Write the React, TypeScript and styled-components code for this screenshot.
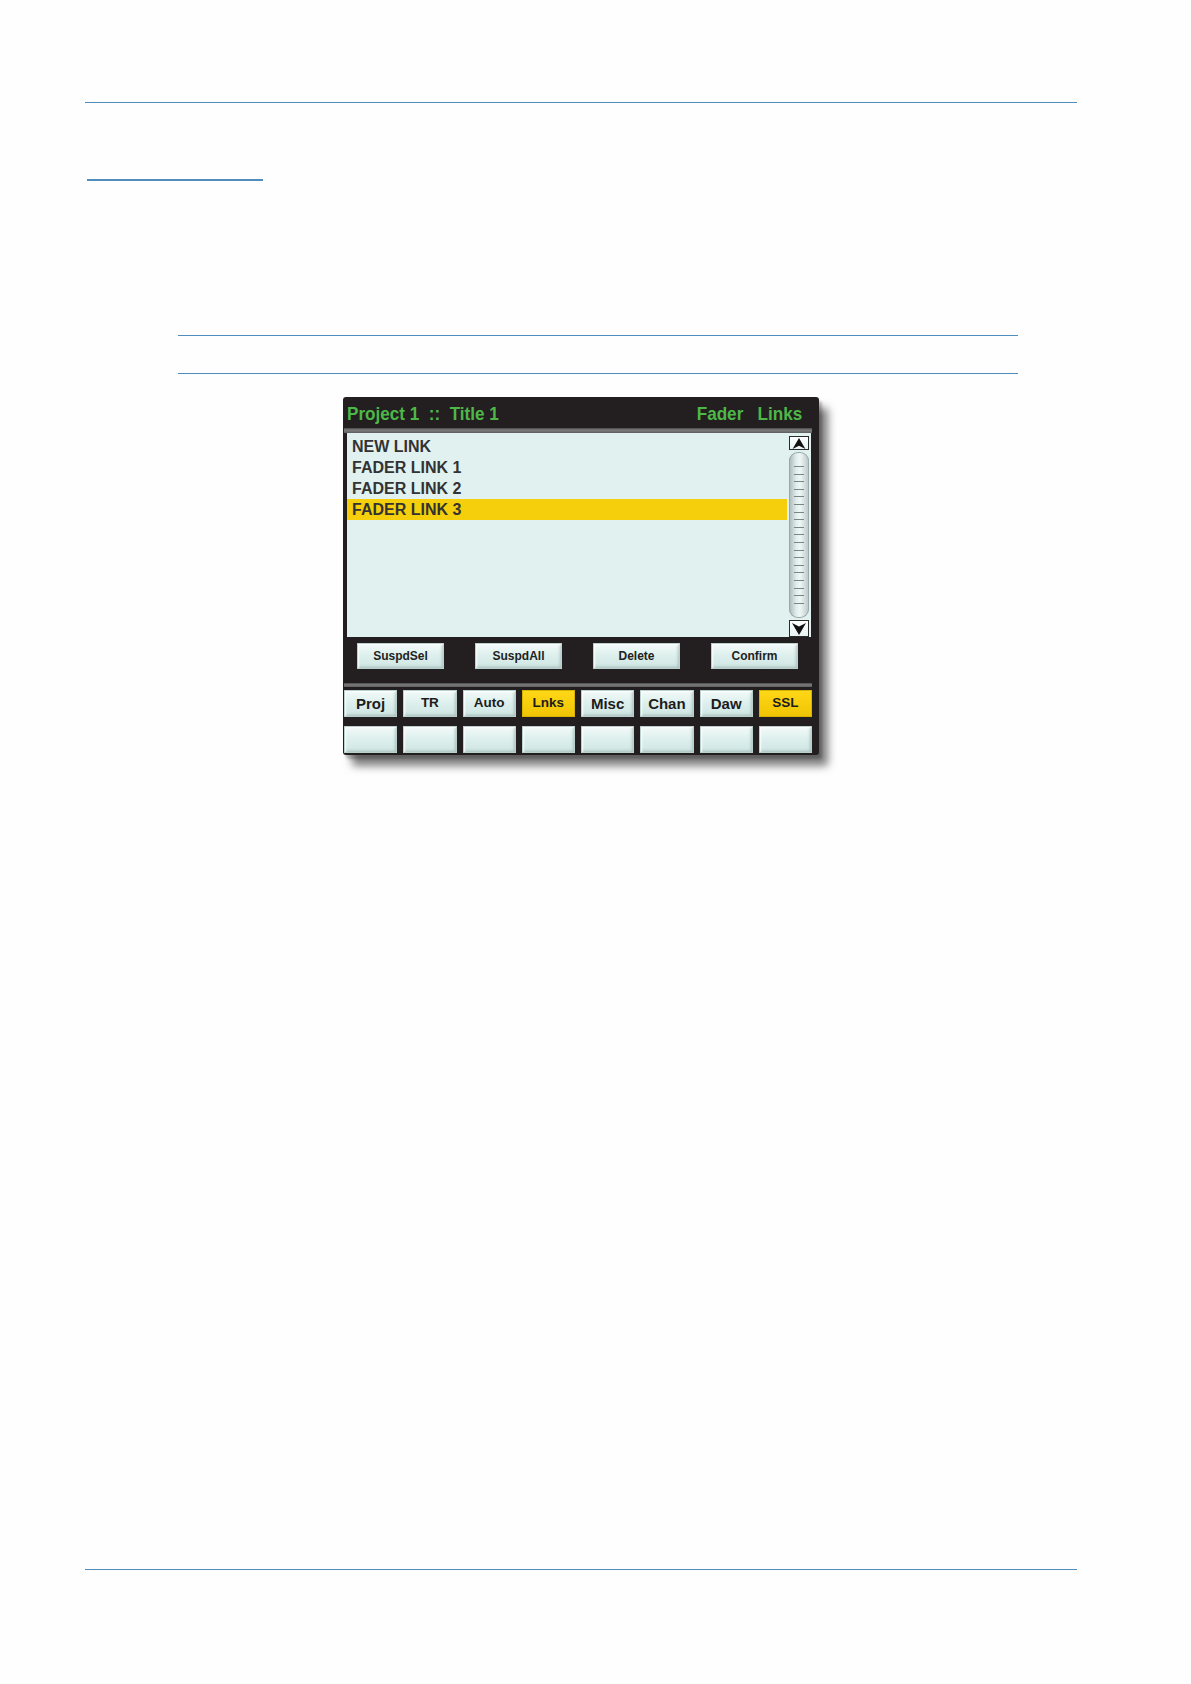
import React from "react";
import styled, { createGlobalStyle } from "styled-components";

const Global = createGlobalStyle`
  html, body { margin: 0; padding: 0; background: #fefefe; }
  body { font-family: "Liberation Sans", Arial, sans-serif; }
`;

const Page = styled.div`
  width: 1191px;
  height: 1684px;
  display: flex;
  flex-direction: column;
  align-items: flex-start;
`;

const Rule = styled.div<{ $top: number; $left: number; $width: number; $thick?: number }>`
  margin-top: ${(p) => p.$top}px;
  margin-left: ${(p) => p.$left}px;
  width: ${(p) => p.$width}px;
  height: ${(p) => p.$thick ?? 1}px;
  background: #4f8dbd;
  flex: none;
`;

const Panel = styled.div`
  margin-top: 23px;
  margin-left: 343px;
  width: 476px;
  height: 358px;
  box-sizing: border-box;
  background: #231f20;
  border-radius: 3px;
  box-shadow: 9px 11px 9px rgba(0, 0, 0, 0.5), 3px 4px 3px rgba(0, 0, 0, 0.25);
  display: flex;
  flex-direction: column;
  padding-bottom: 2px;
  flex: none;
`;

const Header = styled.div`
  height: 31px;
  box-sizing: border-box;
  padding: 3px 17px 0 4px;
  display: flex;
  justify-content: space-between;
  align-items: center;
  color: #4db848;
  font-weight: bold;
  font-size: 19px;
  white-space: pre;
`;

const Condensed = styled.span<{ $origin: "left" | "right" }>`
  display: inline-block;
  transform: scaleX(0.9);
  transform-origin: ${(p) => p.$origin} center;
`;

const Band = styled.div<{ $h: number; $mt?: number }>`
  height: ${(p) => p.$h}px;
  margin: ${(p) => p.$mt ?? 0}px 7px 0 1px;
  background: linear-gradient(to bottom, #4a4a4a, #7d7d7d 45%, #5c5c5c);
`;

const ListBox = styled.div`
  height: 204px;
  margin: 0 8px 0 4px;
  box-sizing: border-box;
  padding: 3px 2px 0 0;
  background: #e1f1ef;
  display: grid;
  grid-template-columns: 1fr 20px;
  column-gap: 2px;
`;

const Items = styled.div`
  display: flex;
  flex-direction: column;
`;

const Item = styled.div<{ $sel?: boolean }>`
  height: 21px;
  line-height: 21px;
  padding-left: 5px;
  font-size: 16px;
  font-weight: bold;
  color: #333333;
  background: ${(p) => (p.$sel ? "#f6cf0c" : "transparent")};
`;

const ScrollCol = styled.div`
  display: flex;
  flex-direction: column;
  gap: 2px;
`;

const ArrowBtn = styled.div<{ $h: number }>`
  height: ${(p) => p.$h}px;
  background: linear-gradient(to bottom, #ffffff, #e6f2f1);
  box-shadow: inset 0 0 0 1px #2a2a2a;
  display: flex;
  align-items: center;
  justify-content: center;
`;

const Track = styled.div`
  flex: 1;
  border-radius: 9px;
  background: linear-gradient(to right, #a9b6b6, #dfeceb 35%, #eef7f6 55%, #b9c6c6);
  box-shadow: inset 0 0 0 1px #9aa8a8;
  display: flex;
  justify-content: center;
  padding: 14px 0 12px;
  box-sizing: border-box;
`;

const Ticks = styled.div`
  width: 10px;
  height: 100%;
  background: repeating-linear-gradient(
    to bottom,
    #7a8585 0px,
    #7a8585 1px,
    transparent 1px,
    transparent 7.6px
  );
`;

const ActionRow = styled.div`
  margin-top: 6px;
  padding-left: 14px;
  display: flex;
  gap: 31px;
`;

const bevel = `
  background: linear-gradient(to bottom, #f4fbfa, #dcefec 50%, #cfe5e2);
  box-shadow: inset 0 0 0 1px #b9d0cd, inset 2px 2px 2px rgba(255,255,255,0.9),
    inset -2px -2px 3px rgba(110,140,138,0.45);
`;

const ActionButton = styled.div`
  width: 87px;
  height: 26px;
  ${bevel}
  display: flex;
  align-items: center;
  justify-content: center;
  font-size: 12px;
  font-weight: bold;
  color: #222;
`;

const TabRow = styled.div<{ $mt: number }>`
  margin: ${(p) => p.$mt}px 7px 0 1px;
  height: 27px;
  display: grid;
  grid-template-columns: repeat(8, 1fr);
  column-gap: 6px;
`;

const Tab = styled.div<{ $active?: boolean; $small?: boolean }>`
  ${bevel}
  ${(p) =>
    p.$active
      ? `background: linear-gradient(to bottom, #ffd819, #f6cc0a 60%, #eec306);
         box-shadow: inset 0 0 0 1px #d8b400;`
      : ""}
  display: flex;
  align-items: center;
  justify-content: center;
  font-size: ${(p) => (p.$small ? 13.5 : 15)}px;
  font-weight: bold;
  color: #1c1c1c;
  padding-bottom: ${(p) => (p.$small ? 2 : 0)}px;
  box-sizing: border-box;
`;

const Up = () => (
  <svg width="14" height="11" viewBox="0 0 14 12">
    <path d="M7 0 L14 12 L7 8.5 L0 12 Z" fill="#111" />
  </svg>
);
const Down = () => (
  <svg width="14" height="12" viewBox="0 0 14 12">
    <path d="M7 12 L14 0 L7 3.5 L0 0 Z" fill="#111" />
  </svg>
);

const items = ["NEW LINK", "FADER LINK 1", "FADER LINK 2", "FADER LINK 3"];
const actions = ["SuspdSel", "SuspdAll", "Delete", "Confirm"];
const tabs: { label: string; active?: boolean; small?: boolean }[] = [
  { label: "Proj" },
  { label: "TR", small: true },
  { label: "Auto", small: true },
  { label: "Lnks", active: true, small: true },
  { label: "Misc" },
  { label: "Chan" },
  { label: "Daw" },
  { label: "SSL", active: true, small: true },
];

export default function App() {
  return (
    <>
      <Global />
      <Page>
        <Rule $top={102} $left={85} $width={992} />
        <Rule $top={76} $left={87} $width={176} $thick={2} />
        <Rule $top={154} $left={178} $width={840} />
        <Rule $top={37} $left={178} $width={840} />
        <Panel>
          <Header>
            <Condensed $origin="left">{"Project 1  ::  Title 1"}</Condensed>
            <Condensed $origin="right">{"Fader   Links"}</Condensed>
          </Header>
          <Band $h={5} />
          <ListBox>
            <Items>
              {items.map((t, i) => (
                <Item key={t} $sel={i === 3}>
                  {t}
                </Item>
              ))}
            </Items>
            <ScrollCol>
              <ArrowBtn $h={14}>
                <Up />
              </ArrowBtn>
              <Track>
                <Ticks />
              </Track>
              <ArrowBtn $h={17}>
                <Down />
              </ArrowBtn>
            </ScrollCol>
          </ListBox>
          <ActionRow>
            {actions.map((a) => (
              <ActionButton key={a}>{a}</ActionButton>
            ))}
          </ActionRow>
          <Band $h={4} $mt={14} />
          <TabRow $mt={3}>
            {tabs.map((t) => (
              <Tab key={t.label} $active={t.active} $small={t.small}>
                {t.label}
              </Tab>
            ))}
          </TabRow>
          <TabRow $mt={9}>
            {tabs.map((t) => (
              <Tab key={t.label} />
            ))}
          </TabRow>
        </Panel>
        <Rule $top={814} $left={85} $width={992} />
      </Page>
    </>
  );
}
